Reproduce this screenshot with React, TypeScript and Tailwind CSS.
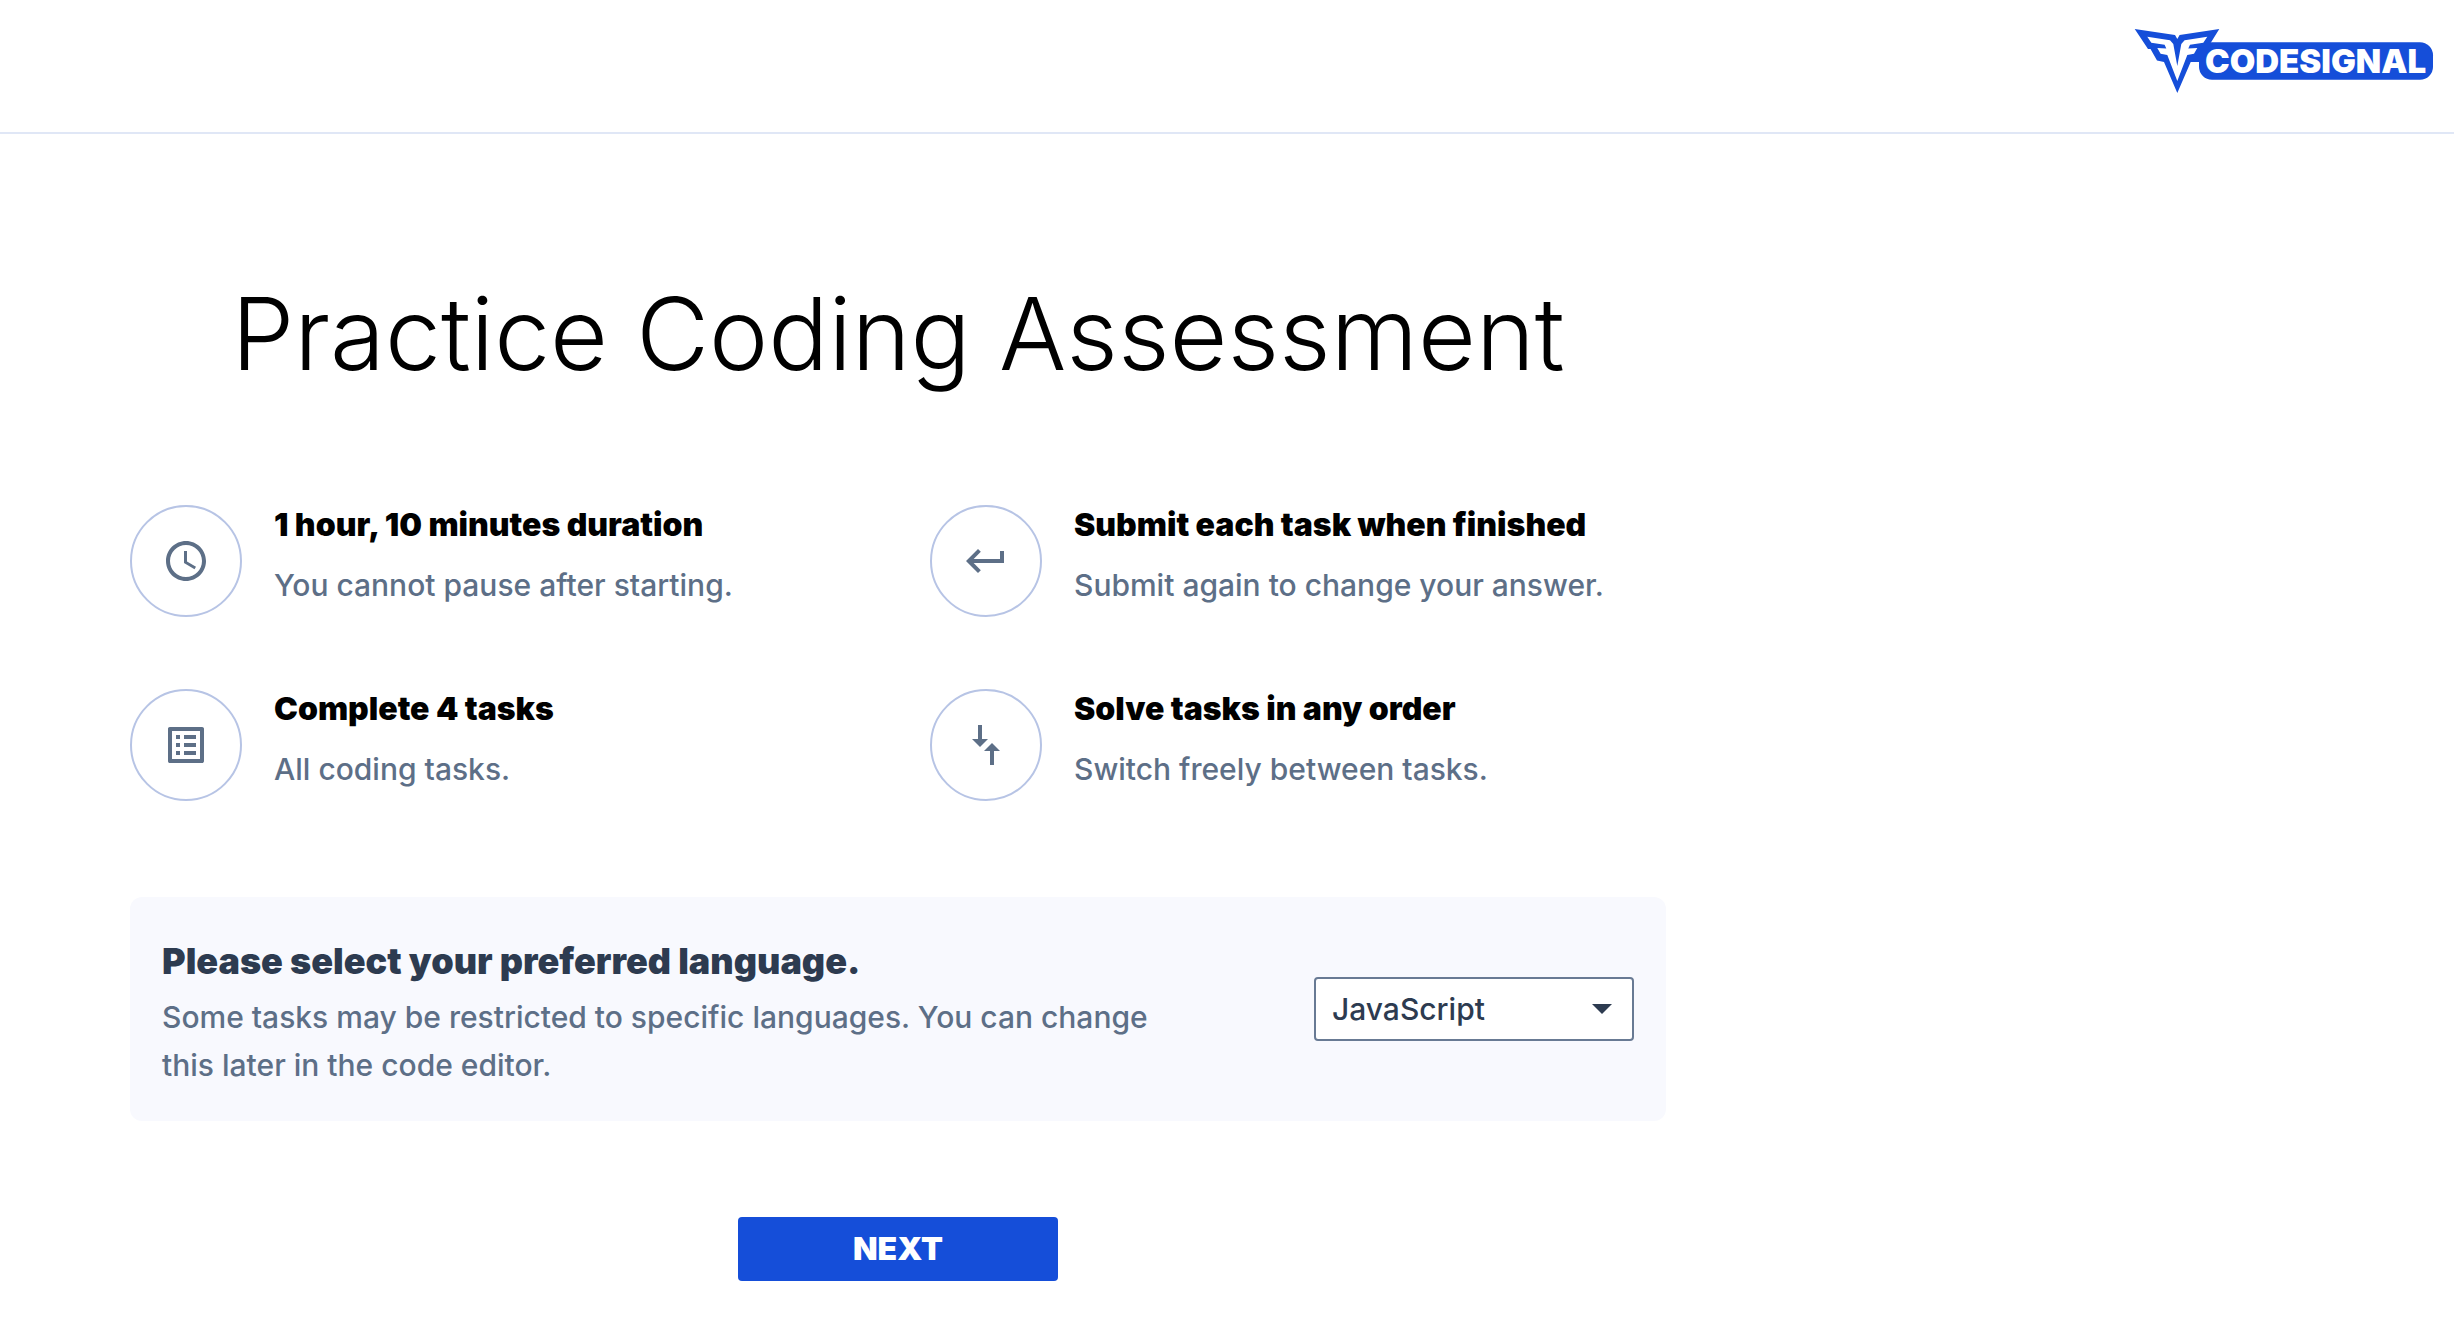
import type { ReactNode } from "react";
import { MdAccessTime, MdOutlineListAlt, MdKeyboardReturn } from "react-icons/md";

function Logo() {
  return (
    <svg viewBox="0 0 300 66" className="h-[66px] w-[300px]" role="img" aria-label="CodeSignal">
      <g fill="#154ed9">
        <rect x="65" y="14.300" width="234" height="37.400" rx="13" />
        <path d="M0.700 1 41 7l2.300 4 2.300-4L85.300 1 76 16 68 34H56.700L43.300 65 30 34 23 32.500 16.500 21H14z" />
      </g>
      <path
        fill="#fff"
        d="M13.300 8.700 36 12.300 39.300 16 43.300 38 47.300 16 50.600 12.300 73.300 8.700 69.300 14.700 56 16.800 54.300 20.500 63.300 20 60 25.700 53.300 27 43.300 53 33.300 27 26.600 25.700 23.300 20 32.300 20.500 30.600 16.800 17.300 14.700z"
      />
      <text x="71" y="45" fill="#fff" fontFamily="Inter, sans-serif" fontSize="33" fontWeight="900">
        CODESIGNAL
      </text>
    </svg>
  );
}

function OrderIcon() {
  return (
    <svg viewBox="0 0 24 24" className="size-12" fill="currentColor" aria-hidden="true">
      <path d="M8 2v7H5l4 4 4-4h-3V2zM16 22v-7h3l-4-4-4 4h3v7z" />
    </svg>
  );
}

function Fact({ icon, title, text }: { icon: ReactNode; title: string; text: string }) {
  return (
    <li className="flex gap-8">
      <div className="flex size-28 shrink-0 items-center justify-center rounded-full border-2 border-[#b7c4e5] text-[#5d6f87]">
        {icon}
      </div>
      <div className="flex flex-col gap-5">
        <h2 className="text-[32px] leading-10 font-black text-black">{title}</h2>
        <p className="text-[30px] leading-10 font-medium text-[#5d6f87]">{text}</p>
      </div>
    </li>
  );
}

export default function App() {
  return (
    <div className="min-h-screen bg-white font-['Inter',sans-serif]">
      <header className="flex h-[134px] items-start justify-end border-b-2 border-[#e0e7f6] px-5 pt-7">
        <a href="#">
          <Logo />
        </a>
      </header>
      <main className="ml-[130px] flex max-w-[1536px] flex-col items-center pt-[140px]">
        <h1 className="text-center text-[100px] leading-[120px] font-light text-black">
          Practice Coding Assessment
        </h1>
        <ul className="mt-[111px] grid w-full grid-cols-2 gap-x-16 gap-y-[72px]">
          <Fact
            icon={<MdAccessTime className="size-12" />}
            title="1 hour, 10 minutes duration"
            text="You cannot pause after starting."
          />
          <Fact
            icon={<MdKeyboardReturn className="size-12" />}
            title="Submit each task when finished"
            text="Submit again to change your answer."
          />
          <Fact
            icon={<MdOutlineListAlt className="size-12" />}
            title="Complete 4 tasks"
            text="All coding tasks."
          />
          <Fact icon={<OrderIcon />} title="Solve tasks in any order" text="Switch freely between tasks." />
        </ul>
        <section className="mt-24 flex w-full items-center justify-between rounded-xl bg-[#f8f9fe] px-8">
          <div className="max-w-[1000px] pt-10 pb-8">
            <label htmlFor="language" className="block text-[36px] leading-[48px] font-black text-[#2d3b50]">
              Please select your preferred language.
            </label>
            <p className="mt-2 text-[30px] leading-[48px] font-medium text-[#5d6f87]">
              Some tasks may be restricted to specific languages. You can change this later in the code editor.
            </p>
          </div>
          <div className="relative w-80 shrink-0">
            <select
              id="language"
              defaultValue="JavaScript"
              className="h-16 w-full appearance-none rounded border-2 border-[#687a94] bg-white px-4 text-[30px] font-medium text-[#2d3b50]"
            >
              <option>JavaScript</option>
              <option>Python</option>
              <option>Java</option>
            </select>
            <svg
              viewBox="0 0 20 10"
              className="pointer-events-none absolute top-[27px] right-[22px] h-[10px] w-5"
              fill="#2d3b50"
              aria-hidden="true"
            >
              <path d="M0 0h20L10 10z" />
            </svg>
          </div>
        </section>
        <button type="button" className="mt-24 h-16 w-80 rounded bg-[#154ed9] text-[32px] font-black text-white">
          NEXT
        </button>
      </main>
    </div>
  );
}
